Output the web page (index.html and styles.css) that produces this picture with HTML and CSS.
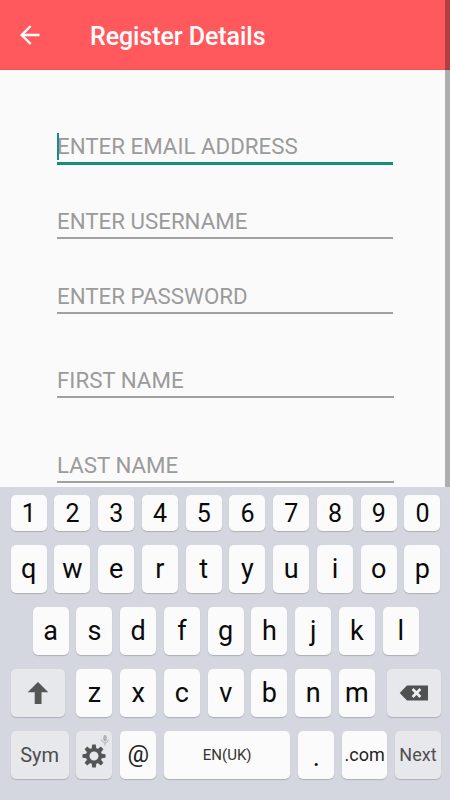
FILE: index.html
```html
<!DOCTYPE html>
<html lang="en">
<head>
<meta charset="utf-8">
<title>Register Details</title>
<link rel="stylesheet" href="styles.css">
</head>
<body>
<div class="screen">
  <header class="appbar">
    <svg class="back" viewBox="0 0 20 20"><path d="M19.5 10H1.8M10.700 1L1.700 10l9 9" fill="none" stroke="#fff" stroke-width="2.400"/></svg>
    <h1 class="title">Register Details</h1>
  </header>
  <main class="form">
    <div class="field active"><span>ENTER EMAIL ADDRESS</span></div>
    <div class="field"><span>ENTER USERNAME</span></div>
    <div class="field"><span>ENTER PASSWORD</span></div>
    <div class="field wide first"><span>FIRST NAME</span></div>
    <div class="field wide last"><span>LAST NAME</span></div>
  </main>
  <section class="keyboard">
    <div class="row digits">
      <div class="key">1</div><div class="key">2</div><div class="key">3</div><div class="key">4</div><div class="key">5</div><div class="key">6</div><div class="key">7</div><div class="key">8</div><div class="key">9</div><div class="key">0</div>
    </div>
    <div class="row">
      <div class="key">q</div><div class="key">w</div><div class="key">e</div><div class="key">r</div><div class="key">t</div><div class="key">y</div><div class="key">u</div><div class="key">i</div><div class="key">o</div><div class="key">p</div>
    </div>
    <div class="row middle">
      <div class="key">a</div><div class="key">s</div><div class="key">d</div><div class="key">f</div><div class="key">g</div><div class="key">h</div><div class="key">j</div><div class="key">k</div><div class="key">l</div>
    </div>
    <div class="row">
      <div class="key dim shift"><svg width="22" height="24" viewBox="0 0 22 24"><path d="M11 1L21.300 11.300H14.500V23H7.700V11.300H.7z" fill="#555"/></svg></div>
      <div class="key">z</div><div class="key">x</div><div class="key">c</div><div class="key">v</div><div class="key">b</div><div class="key">n</div><div class="key">m</div>
      <div class="key dim erase"><svg width="30" height="16" viewBox="0 0 30 16"><path d="M.7 8L8 .5H29V15.500H8z" fill="#505050"/><path d="M13.600 4l7.800 8M21.400 4l-7.800 8" stroke="#ededf0" stroke-width="2.600"/></svg></div>
    </div>
    <div class="row">
      <div class="key dim sym">Sym</div>
      <div class="key dim gear">
        <svg class="cog" viewBox="-12 -12 24 24"><g fill="#555"><path id="tooth" d="M-2.500 -6L-1.800 -11.500H1.800L2.500 -6z"/><use href="#tooth" transform="rotate(45)"/><use href="#tooth" transform="rotate(90)"/><use href="#tooth" transform="rotate(135)"/><use href="#tooth" transform="rotate(180)"/><use href="#tooth" transform="rotate(225)"/><use href="#tooth" transform="rotate(270)"/><use href="#tooth" transform="rotate(315)"/></g><circle r="6.300" fill="none" stroke="#555" stroke-width="3.600"/></svg>
        <svg class="mic" viewBox="0 0 8 11"><rect x="2.300" y="0" width="3.400" height="6.500" rx="1.700" fill="#b2b2b5"/><path d="M.7 4.500C.7 9 7.300 9 7.300 4.500M4 8v2.800" fill="none" stroke="#b2b2b5"/></svg>
      </div>
      <div class="key at">@</div>
      <div class="key space">EN(UK)</div>
      <div class="key dot">.</div>
      <div class="key com">.com</div>
      <div class="key dim next">Next</div>
    </div>
  </section>
  <div class="scrollbar"></div>
</div>
</body>
</html>
```
FILE: styles.css
```css
* { box-sizing: border-box; }
body { margin: 0; font-family: Roboto, "Liberation Sans", sans-serif; }
.screen {
  position: relative;
  width: 450px;
  height: 800px;
  overflow: hidden;
  display: flex;
  flex-direction: column;
  background: #fafafa;
}
.appbar {
  height: 70px;
  flex: none;
  display: flex;
  align-items: center;
  padding: 1px 0 0 20px;
  background: #ff595d;
  border-bottom: 1px solid #ed5358;
}
.back { width: 20px; height: 20px; margin-top: -1px; }
.title {
  margin: 4px 0 0 50px;
  font-size: 25px;
  letter-spacing: -0.060px;
  line-height: 30px;
  font-weight: 500;
  color: #fff;
}
.form { height: 417px; flex: none; padding: 57px 0 0 57px; overflow: hidden; }
.field {
  position: relative;
  width: 336px;
  height: 37px;
  margin-bottom: 38px;
  border-bottom: 2px solid #a0a0a0;
  font-size: 22.300px;
  line-height: 39px;
  color: #9b9b9b;
  white-space: nowrap;
}
.field.active { height: 38px; border-bottom: 3px solid #168d80; margin-bottom: 37px; }
.active::before {
  content: "";
  position: absolute;
  left: 0;
  top: 6px;
  width: 2px;
  height: 27px;
  background: #168d80;
}
.wide { width: 337px; line-height: 38px; }
.first { margin-top: 47px; margin-bottom: 48px; }
.keyboard {
  flex: 1;
  padding: 8px 9.500px 0 10.700px;
  display: flex;
  flex-direction: column;
  gap: 14px;
  background: #d4d7df;
}
.row { display: flex; gap: 7.750px; height: 48px; flex: none; }
.digits { height: 36px; }
.middle { padding-left: 22px; }
.key {
  width: 36px;
  flex: none;
  display: flex;
  align-items: center;
  justify-content: center;
  border-radius: 5px;
  background: #fbfbfb;
  box-shadow: 0 1px 1px #aeb0b6;
  font-size: 27px;
  line-height: 1;
  color: #0a0a0a;
}
.digits .key { font-size: 25px; }
.dim { background: #e7e8eb; color: #4d4d50; }
.shift { width: 54px; margin-right: 4px; }
.erase { width: 54px; margin-left: 4px; }
.sym { width: 58px; font-size: 20px; }
.gear { position: relative; }
.cog { width: 24px; height: 24px; margin-top: 2px; }
.mic { position: absolute; right: 3px; top: 4px; width: 8px; height: 11px; }
.at { font-size: 24px; color: #222; padding-bottom: 2px; }
.space { width: 126.500px; font-size: 15px; color: #333; }
.dot { padding-top: 4px; }
.com { width: 45.500px; font-size: 18px; color: #222; }
.next { width: 45.500px; font-size: 18px; }
.scrollbar {
  position: absolute;
  right: 0;
  top: 0;
  width: 5px;
  height: 487px;
  background: rgba(0, 0, 0, 0.3);
}
```
